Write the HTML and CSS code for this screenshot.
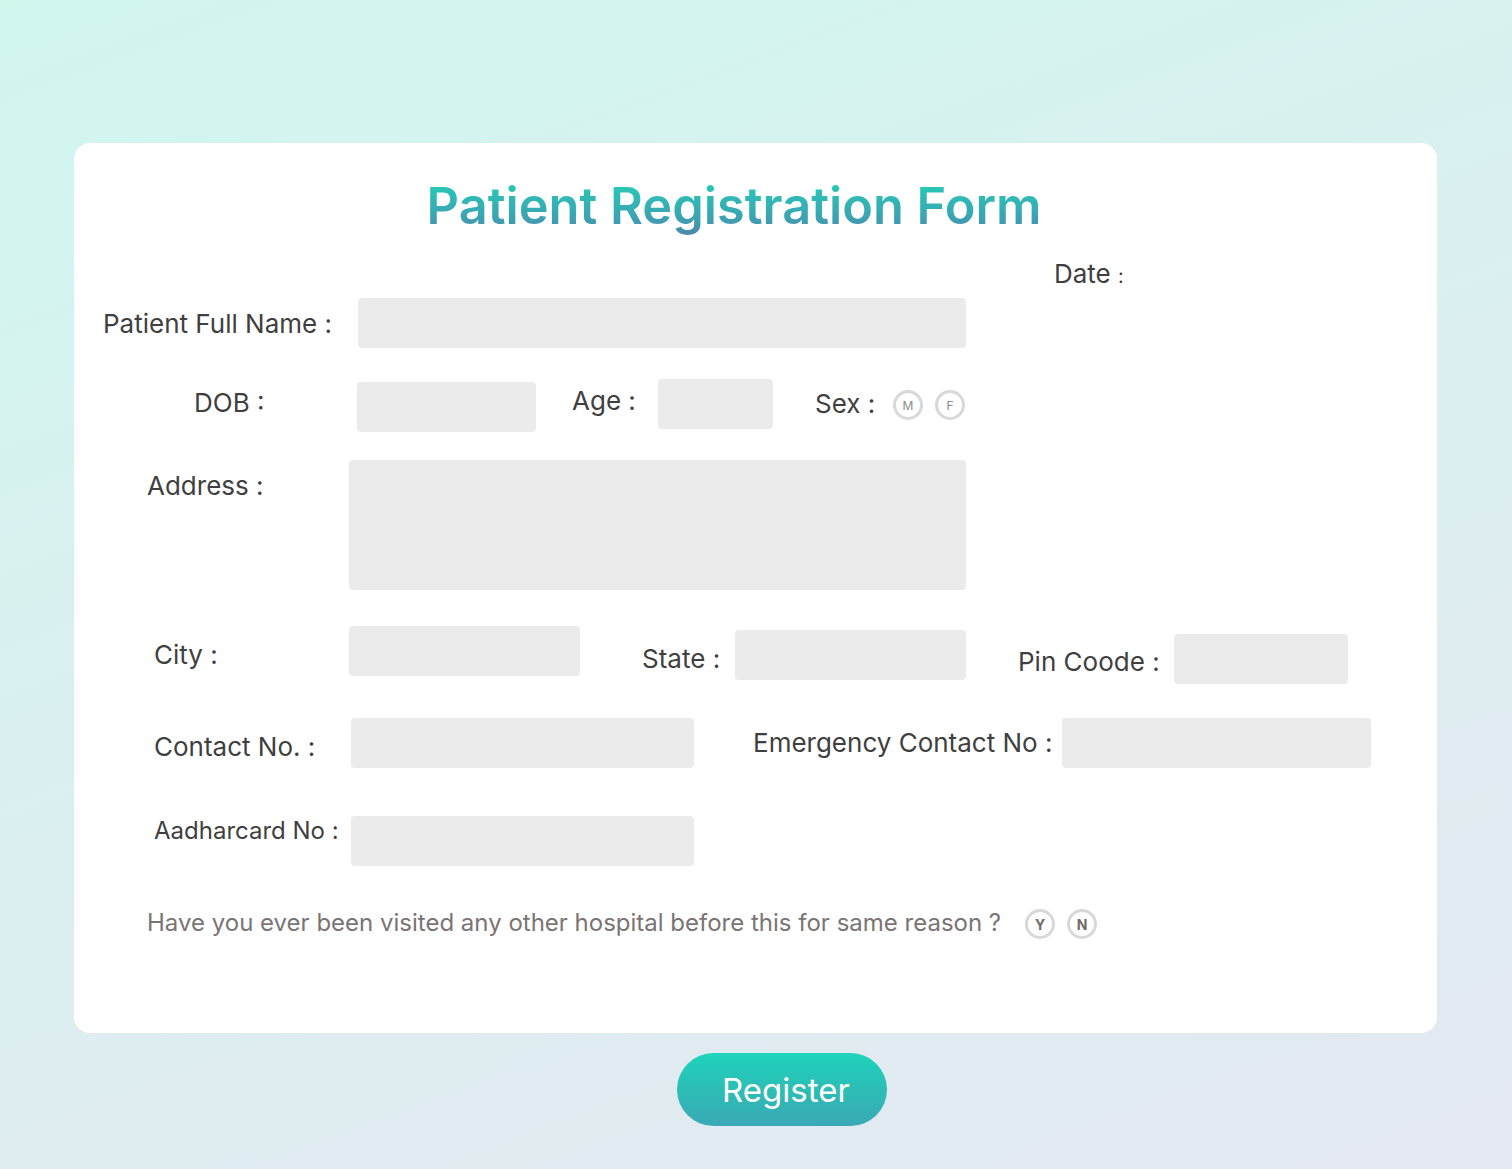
FILE: index.html
```html
<!DOCTYPE html>
<html lang="en">
<head>
<meta charset="utf-8">
<title>Patient Registration Form</title>
<link rel="stylesheet" href="styles.css">
</head>
<body>
<main class="page">
  <form class="card">
    <h1 class="title">Patient Registration Form</h1>

    <div class="row row-date">
      <span class="label date-label">Date <span class="small-colon">:</span></span>
    </div>

    <div class="row row-name">
      <label class="label w-name">Patient Full Name :</label>
      <div class="field w608"></div>
    </div>

    <div class="row row-dob">
      <label class="label w-dob mt9">DOB :</label>
      <div class="field w179 mt3"></div>
      <label class="label w-age mt7">Age :</label>
      <div class="field w115"></div>
      <label class="label w-sex mt10">Sex :</label>
      <span class="radio small mt11">M</span>
      <span class="radio small mt11">F</span>
    </div>

    <div class="row row-address">
      <label class="label w-address mt11">Address :</label>
      <div class="field area"></div>
    </div>

    <div class="row row-city">
      <label class="label w-city mt14">City :</label>
      <div class="field w231"></div>
      <label class="label w-state mt18">State :</label>
      <div class="field w231 mt4"></div>
      <label class="label w-pin mt21">Pin Coode :</label>
      <div class="field w174 mt8"></div>
    </div>

    <div class="row row-contact">
      <label class="label w-contact mt14">Contact No. :</label>
      <div class="field w343"></div>
      <label class="label w-emergency mt10">Emergency Contact No :</label>
      <div class="field w309"></div>
    </div>

    <div class="row row-aadhar">
      <label class="label w-contact label-sm">Aadharcard No :</label>
      <div class="field w343"></div>
    </div>

    <div class="row row-question">
      <span class="question">Have you ever been visited any other hospital before this for same reason ?</span>
      <span class="radio bold">Y</span>
      <span class="radio bold">N</span>
    </div>
  </form>

  <button class="register" type="button">Register</button>
</main>
</body>
</html>
```

FILE: styles.css
```css
html, body {
  margin: 0;
  padding: 0;
}

body {
  width: 1512px;
  height: 1169px;
  overflow: hidden;
  font-family: "Inter", "Liberation Sans", sans-serif;
  background: linear-gradient(160deg, #d0f6ee 0%, #dbeff0 50%, #e4e8f1 100%);
}

.page {
  display: flex;
  flex-direction: column;
  align-items: flex-start;
  padding-top: 143px;
  padding-left: 74px;
}

.card {
  box-sizing: border-box;
  width: 1363px;
  height: 890px;
  background: #ffffff;
  border-radius: 16px;
  padding-top: 33px;
  display: flex;
  flex-direction: column;
}

.title {
  margin: 0 43px 0 0;
  align-self: center;
  height: 60px;
  line-height: 60px;
  font-size: 50.5px;
  font-weight: 600;
  text-align: center;
  color: #2fb8b4;
  background: linear-gradient(180deg, #28c8b7 15%, #3aa6b3 65%, #4f86ad 100%);
  -webkit-background-clip: text;
  background-clip: text;
  -webkit-text-fill-color: transparent;
}

.row {
  display: flex;
  align-items: flex-start;
}

.label {
  display: block;
  flex: none;
  font-size: 26px;
  line-height: 30px;
  color: #3f3f3f;
  white-space: nowrap;
}

.label-sm {
  font-size: 24px;
}

.small-colon {
  font-size: 20px;
}

.field {
  flex: none;
  height: 50px;
  background: #ebebeb;
  border-radius: 4px;
}

.row-date { margin-top: 23px; height: 30px; }
.date-label { margin-left: 980px; }

.row-name { margin-top: 9px; }
.w-name { margin-left: 29px; width: 255px; margin-top: 11px; }
.w608 { width: 608px; }

.row-dob { margin-top: 31px; }
.w-dob { margin-left: 120px; width: 163px; }
.w179 { width: 179px; }
.w-age { margin-left: 36px; width: 86px; }
.w115 { width: 115px; }
.w-sex { margin-left: 42px; width: 78px; }

.row-address { margin-top: 28px; }
.w-address { margin-left: 73px; width: 202px; }
.area { width: 617px; height: 130px; }

.row-city { margin-top: 36px; }
.w-city { margin-left: 80px; width: 195px; }
.w231 { width: 231px; }
.w-state { margin-left: 62px; width: 93px; }
.w-pin { margin-left: 52px; width: 156px; }
.w174 { width: 174px; }

.row-contact { margin-top: 34px; }
.w-contact { margin-left: 80px; width: 197px; }
.w343 { width: 343px; }
.w-emergency { margin-left: 59px; width: 309px; }
.w309 { width: 309px; }

.row-aadhar { margin-top: 48px; }

.row-question { margin-top: 41px; align-items: center; }
.question {
  margin-left: 73px;
  width: 878px;
  font-size: 24px;
  line-height: 30px;
  color: #7a7474;
  white-space: nowrap;
}

.mt3 { margin-top: 3px; }
.mt4 { margin-top: 4px; }
.mt7 { margin-top: 7px; }
.mt8 { margin-top: 8px; }
.mt9 { margin-top: 9px; }
.mt10 { margin-top: 10px; }
.mt11 { margin-top: 11px; }
.mt14 { margin-top: 14px; }
.mt18 { margin-top: 18px; }
.mt21 { margin-top: 21px; }

.radio {
  box-sizing: border-box;
  flex: none;
  width: 30px;
  height: 30px;
  border: 3px solid #d8d8d8;
  border-radius: 50%;
  display: flex;
  align-items: center;
  justify-content: center;
  background: #fff;
  color: #8a8a8a;
}

.radio + .radio { margin-left: 12px; }

.radio.small {
  font-size: 12px;
  font-weight: 400;
}

.radio.bold {
  font-size: 14px;
  font-weight: 700;
  color: #6e6a6a;
  margin-top: 2px;
}

.register {
  margin-top: 20px;
  margin-left: 603px;
  width: 210px;
  height: 73px;
  border: none;
  border-radius: 37px;
  background: linear-gradient(180deg, #1fd3bc 0%, #2cbdb5 50%, #3aa9b6 100%);
  color: #ffffff;
  font-family: "Inter", "Liberation Sans", sans-serif;
  font-size: 33px;
  font-weight: 400;
  padding: 0 0 0 8px;
  cursor: pointer;
}
```
